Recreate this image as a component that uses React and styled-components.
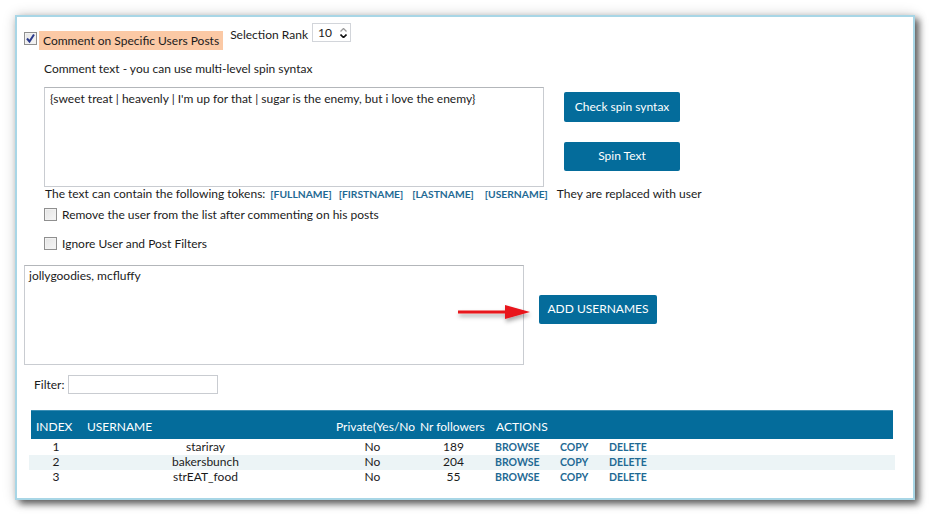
import React from "react";
import styled, { createGlobalStyle } from "styled-components";

const Global = createGlobalStyle`
  html, body { margin: 0; padding: 0; background: #ffffff; }
  body { font-family: Lato, "Open Sans", sans-serif; font-size: 12px; color: #1b1b1b; }
  * { box-sizing: border-box; }
`;

const Page = styled.div`
  width: 931px;
  height: 518px;
  padding: 15px 0 0 15px;
`;

const Window = styled.div`
  position: relative;
  width: 900px;
  height: 485px;
  background: #ffffff;
  border: 2px solid #a8d6e6;
  box-shadow: 4px 4px 7px rgba(0, 0, 0, 0.6), 0 0 12px rgba(0, 0, 0, 0.18);
  padding: 6px 0 0 7px;
  display: flex;
  flex-direction: column;
`;

const TopRow = styled.div`
  display: flex;
  align-items: flex-start;
  height: 27px;
`;

const Check = styled.span`
  display: inline-flex;
  align-items: center;
  justify-content: center;
  width: 13px;
  height: 13px;
  flex: none;
  border: 1px solid #8f8f8f;
  background: linear-gradient(135deg, #e4e4e4, #f6f6f6);
  margin-top: ${(p) => p.$top || 0}px;
  box-shadow: inset 0 0 0 1px #f2f2f2;
`;

const PeachLabel = styled.span`
  background: #fbc9a5;
  height: 19px;
  line-height: 19px;
  padding: 0 4px;
  margin: 8px 0 0 2px;
  white-space: nowrap;
`;

const Plain = styled.span`
  white-space: nowrap;
  line-height: 16px;
  margin: ${(p) => p.$m || "0"};
`;

const Spinner = styled.div`
  width: 39px;
  height: 19px;
  border: 1px solid #d2d5da;
  margin-left: 4px;
  display: flex;
  align-items: center;
  justify-content: space-between;
  padding: 0 3px 0 5px;
  line-height: 16px;
`;

const Arrows = styled.div`
  display: flex;
  flex-direction: column;
  gap: 2px;
`;

const Indented = styled.div`
  padding-left: 20px;
  display: flex;
  flex-direction: column;
`;

const Line = styled.div`
  white-space: nowrap;
  line-height: ${(p) => p.$lh || 16}px;
  margin-top: ${(p) => p.$mt || 0}px;
  display: flex;
  align-items: center;
`;

const EditorRow = styled.div`
  display: flex;
  margin-top: ${(p) => p.$mt || 0}px;
  gap: ${(p) => p.$gap || 20}px;
`;

const TextBox = styled.div`
  width: 500px;
  height: ${(p) => p.$h || 100}px;
  border: 1px solid #c9ccd1;
  border-top-color: #b3b6ba;
  padding: ${(p) => p.$pad || "3px 5px"};
  line-height: 15px;
  white-space: nowrap;
`;

const ButtonCol = styled.div`
  display: flex;
  flex-direction: column;
  gap: 20px;
  padding-top: ${(p) => p.$pt || 0}px;
`;

const Button = styled.div`
  width: ${(p) => p.$w || 116}px;
  height: ${(p) => p.$h || 30}px;
  background: #046c9b;
  color: #ffffff;
  border-radius: 2px;
  display: flex;
  align-items: center;
  justify-content: center;
  padding-bottom: 2px;
  font-size: 12px;
  white-space: nowrap;
`;

const Token = styled.span`
  color: #1f6a94;
  font-weight: 700;
  font-size: 10.3px;
  margin-right: ${(p) => p.$mr || 0}px;
`;

const CheckRow = styled.div`
  display: flex;
  align-items: center;
  gap: 5px;
  height: 14px;
  margin-top: ${(p) => p.$mt || 0}px;
  white-space: nowrap;
`;

const FilterRow = styled.div`
  display: flex;
  align-items: center;
  padding-left: 10px;
  margin-top: ${(p) => p.$mt || 0}px;
  gap: 4px;
`;

const FilterInput = styled.div`
  width: 150px;
  height: 19px;
  border: 1px solid #c9ccd1;
`;

const Table = styled.div`
  margin: 16px 0 0 5px;
  width: 866px;
`;

const cols = "50px 249px 85px 77px 1fr";

const Header = styled.div`
  margin: 0 2px;
  height: 29px;
  background: #046c9b;
  border-top: 1px solid #3c8fb5;
  color: #ffffff;
  display: grid;
  grid-template-columns: ${cols};
  align-items: end;
  padding-bottom: 5px;
  font-size: 12px;
  white-space: nowrap;
`;

const HCell = styled.div`
  overflow: hidden;
  padding-left: ${(p) => p.$pl || 0}px;
`;

const Row = styled.div`
  display: grid;
  grid-template-columns: ${cols};
  height: ${(p) => p.$h}px;
  align-items: center;
  background: ${(p) => (p.$alt ? "#ecf4f6" : "transparent")};
  padding: 0 2px 1px;
  font-size: 12px;
  line-height: 14px;
`;

const Cell = styled.div`
  text-align: center;
  padding-left: ${(p) => p.$pl || 0}px;
`;

const Actions = styled.div`
  display: flex;
  padding-left: 3px;
`;

const Link = styled.span`
  color: #1f6a94;
  font-weight: 700;
  font-size: 10.5px;
  width: ${(p) => p.$w}px;
`;

const ArrowSvg = styled.svg`
  position: absolute;
  left: 440px;
  top: 285px;
  overflow: visible;
`;

function CheckBox({ checked, top }) {
  return (
    <Check $top={top}>
      {checked && (
        <svg width="11" height="11" viewBox="0 0 11 11">
          <path d="M2 5.5 L4.5 8.5 L9 1.5" fill="none" stroke="#2b3a8c" strokeWidth="2" />
        </svg>
      )}
    </Check>
  );
}

const rows = [
  { i: 1, u: "stariray", p: "No", f: 189, h: 16 },
  { i: 2, u: "bakersbunch", p: "No", f: 204, h: 15, alt: true },
  { i: 3, u: "strEAT_food", p: "No", f: 55, h: 15 },
];

export default function App() {
  return (
    <Page>
      <Global />
      <Window>
        <TopRow>
          <CheckBox checked top={9} />
          <PeachLabel>Comment on Specific Users Posts</PeachLabel>
          <Plain $m="4px 0 0 7px">Selection Rank</Plain>
          <Spinner>
            <span>10</span>
            <Arrows>
              <svg width="7" height="4" viewBox="0 0 7 4">
                <path d="M0.5 3.5 L3.5 0.5 L6.5 3.5" fill="none" stroke="#9a9a9a" strokeWidth="1.3" />
              </svg>
              <svg width="7" height="4" viewBox="0 0 7 4">
                <path d="M0.5 0.5 L3.5 3.5 L6.5 0.5" fill="none" stroke="#111" strokeWidth="1.6" />
              </svg>
            </Arrows>
          </Spinner>
        </TopRow>

        <Indented>
          <Line $mt={11}>Comment text - you can use multi-level spin syntax</Line>
          <EditorRow $mt={10}>
            <TextBox>
              {"{sweet treat | heavenly | I'm up for that | sugar is the enemy, but i love the enemy}"}
            </TextBox>
            <ButtonCol $pt={5}>
              <Button>Check spin syntax</Button>
              <Button $h={29}>Spin Text</Button>
            </ButtonCol>
          </EditorRow>
          <Line $lh={14}>
            <span style={{ marginLeft: 1, marginRight: 5 }}>The text can contain the following tokens:</span>
            <Token $mr={7}>[FULLNAME]</Token>
            <Token $mr={9}>[FIRSTNAME]</Token>
            <Token $mr={11}>[LASTNAME]</Token>
            <Token $mr={9}>[USERNAME]</Token>
            <span>They are replaced with user</span>
          </Line>
          <CheckRow $mt={6}>
            <CheckBox />
            <span>Remove the user from the list after commenting on his posts</span>
          </CheckRow>
          <CheckRow $mt={15}>
            <CheckBox />
            <span>Ignore User and Post Filters</span>
          </CheckRow>
        </Indented>

        <EditorRow $mt={15} $gap={15}>
          <TextBox $h={100} $pad="2px 4px">jollygoodies, mcfluffy</TextBox>
          <ButtonCol $pt={30}>
            <Button $w={118} $h={29}>ADD USERNAMES</Button>
          </ButtonCol>
        </EditorRow>

        <FilterRow $mt={10}>
          <span>Filter:</span>
          <FilterInput />
        </FilterRow>

        <Table>
          <Header>
            <HCell $pl={5}>INDEX</HCell>
            <HCell $pl={6}>USERNAME</HCell>
            <HCell $pl={6}>Private(Yes/No)</HCell>
            <HCell $pl={5}>Nr followers</HCell>
            <HCell $pl={4}>ACTIONS</HCell>
          </Header>
          {rows.map((r) => (
            <Row key={r.i} $h={r.h} $alt={r.alt}>
              <Cell $pl={0}>{r.i}</Cell>
              <Cell>{r.u}</Cell>
              <Cell>{r.p}</Cell>
              <Cell>{r.f}</Cell>
              <Actions>
                <Link $w={65}>BROWSE</Link>
                <Link $w={49}>COPY</Link>
                <Link $w={50}>DELETE</Link>
              </Actions>
            </Row>
          ))}
        </Table>

        <ArrowSvg width="74" height="20" viewBox="0 0 74 20">
          <defs>
            <filter id="sh" x="-20%" y="-50%" width="140%" height="250%">
              <feDropShadow dx="1" dy="3" stdDeviation="2" floodColor="#000" floodOpacity="0.35" />
            </filter>
          </defs>
          <g filter="url(#sh)">
            <path d="M1 10 L52 10" stroke="#e8141c" strokeWidth="3" />
            <path d="M48 3 L73 10 L48 17 Z" fill="#e8141c" />
          </g>
        </ArrowSvg>
      </Window>
    </Page>
  );
}
